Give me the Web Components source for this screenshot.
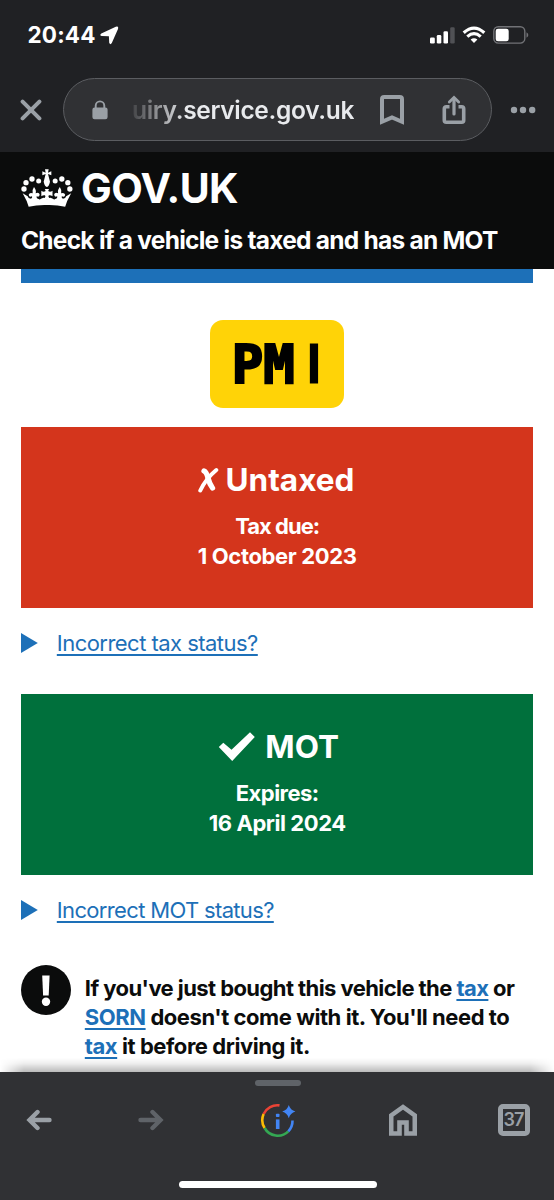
<!DOCTYPE html>
<html lang="en">
<head>
<meta charset="utf-8">
<title>Check if a vehicle is taxed and has an MOT</title>
<style>
    html, body{
        margin: 0;
        padding: 0;
    }
    body{
        width: 554px;
        height: 1200px;
        overflow: hidden;
        background: #fff;
        color: #0b0c0c;
        font-family: Inter, "Liberation Sans", sans-serif;
    }
    a{
        color: #1d70b8;
        text-decoration: underline;
        text-decoration-thickness: 1.5px;
        text-underline-offset: 3px;
    }
</style>
</head>
<body>
<phone-screen>
    <status-bar time="20:44"></status-bar>
    <address-bar><b>uiry</b>.service.gov.uk</address-bar>
    <gov-header>Check if a vehicle is taxed and has an MOT</gov-header>
    <vehicle-page>
        <number-plate></number-plate>
        <status-panel kind="bad" title-width="129" label="Tax due:" label-width="84" date="1 October 2023" date-width="159">Untaxed</status-panel>
        <details-link width="201">Incorrect tax status?</details-link>
        <status-panel kind="good" title-width="74" label="Expires:" label-width="83" date="16 April 2024" date-width="137">MOT</status-panel>
        <details-link width="217">Incorrect MOT status?</details-link>
        <warning-text>
            <fit-line width="429.5">If you've just bought this vehicle the <a>tax</a> or</fit-line>
            <fit-line width="424.5"><a>SORN</a> doesn't come with it. You'll need to</fit-line>
            <fit-line width="225"><a>tax</a> it before driving it.</fit-line>
        </warning-text>
    </vehicle-page>
    <bottom-bar tabs="37"></bottom-bar>
</phone-screen>

<script>
class BaseElement extends HTMLElement{
    constructor() {
        super();
        this.attachShadow({mode:'open'})
    }

    connectedCallback(){
        this.shadowRoot.innerHTML = this.render()
    }

    attr(name){
        return this.getAttribute(name) || ''
    }
}

// one line of text, tracked so that it takes the given width
class FitLine extends BaseElement{
    render(){
        return `
            <style>
                :host{ display: block; white-space: nowrap; }
                span{ display: inline-block; text-decoration: inherit; }
            </style>
            <span><slot></slot></span>`
    }

    connectedCallback(){
        super.connectedCallback()
        const span = this.shadowRoot.querySelector('span')
        const nodes = this.shadowRoot.querySelector('slot').assignedNodes({flatten:true})
        const count = nodes.map(node => node.textContent).join('').trim().length
        const space = (Number(this.attr('width')) - span.getBoundingClientRect().width) / count
        span.style.letterSpacing = space.toFixed(3) + 'px'
    }
}

class PhoneScreen extends BaseElement{
    render(){
        return `
            <style>
                :host{
                    display: grid;
                    grid-template-rows: 64px 88px 117px 803px 128px;
                    width: 554px;
                    height: 1200px;
                }
            </style>
            <slot></slot>`
    }
}

class StatusBar extends BaseElement{
    render(){
        return `
            <style>
                :host{
                    display: flex;
                    align-items: center;
                    box-sizing: border-box;
                    padding: 6px 26px 0 27.500px;
                    background: #202124;
                    color: #fff;
                }
                fit-line{ font-size: 22.5px; font-weight: 700; line-height: 30px; }
                .arrow{ margin-left: 4.500px; }
                .signal{ margin-left: auto; }
                .wifi{ margin-left: 7px; }
                .battery{ margin-left: 7px; }
            </style>
            <fit-line width="68">${this.attr('time')}</fit-line>
            <svg class="arrow" width="19" height="19" viewBox="0 0 19 19"><path d="M1.300 7.600 15.800 .7Q18.900 -.2 18 2.900L11.800 17Q10.300 19.400 9.200 16.800L8.900 10.300 1.900 10Q-.9 9.300 1.300 7.600Z" fill="#fff"/></svg>
            <svg class="signal" width="25" height="18" viewBox="0 0 25 18" fill="#fff">
                <rect x="0" y="11.500" width="4.800" height="6" rx="1.300"/>
                <rect x="6.800" y="9" width="4.500" height="8.500" rx="1.300"/>
                <rect x="13.500" y="5.200" width="4.500" height="12.300" rx="1.300"/>
                <rect x="20.200" y="1.200" width="4.500" height="16.300" rx="1.300" fill="#505155"/>
            </svg>
            <svg class="wifi" width="24" height="18" viewBox="0 0 24 18" fill="none" stroke="#fff" stroke-width="3.200">
                <path d="M1.700 6.700Q12 -2.600 22.300 6.700"/>
                <path d="M5.300 10.600Q12 4.700 18.700 10.600"/>
                <path d="M8.600 13.600Q12 10.900 15.400 13.600L12 17Z" fill="#fff" stroke="none"/>
            </svg>
            <svg class="battery" width="36" height="18" viewBox="0 0 36 18">
                <rect x=".8" y=".8" width="31" height="16.300" rx="4.500" fill="none" stroke="#717276" stroke-width="1.400"/>
                <rect x="2.700" y="2.700" width="13" height="12.500" rx="2.300" fill="#fff"/>
                <path d="M33.500 6.300Q35.300 7.200 35.300 9T33.500 11.700Z" fill="#717276"/>
            </svg>`
    }
}

class AddressBar extends BaseElement{
    render(){
        return `
            <style>
                :host{
                    display: flex;
                    align-items: center;
                    box-sizing: border-box;
                    padding: 3px 19px 0 20px;
                    background: #202124;
                    color: #e8eaed;
                }
                .pill{
                    display: flex;
                    align-items: center;
                    box-sizing: border-box;
                    width: 429px;
                    height: 63px;
                    margin: 0 18px 0 20.500px;
                    padding-left: 28px;
                    border: 1.500px solid #5b5d61;
                    border-radius: 32px;
                    background: #303134;
                }
                fit-line{
                    width: 222px;
                    margin-left: 24.500px;
                    font-size: 24.500px;
                    font-weight: 600;
                    line-height: 34px;
                    -webkit-mask-image: linear-gradient(90deg, rgba(0,0,0,.1), #000 54px);
                    mask-image: linear-gradient(90deg, rgba(0,0,0,.1), #000 54px);
                }
                ::slotted(b){ font-weight: 600; }
                .mark{ margin-left: 25.500px; }
                .share{ margin-left: 38.500px; }
                svg{ flex: none; }
            </style>
            <svg width="22" height="22" viewBox="0 0 22 22" stroke="#9aa0a6" stroke-width="4" stroke-linecap="round"><path d="M2.600 2.600 19.400 19.400M19.400 2.600 2.600 19.400"/></svg>
            <div class="pill">
                <svg width="16" height="20" viewBox="0 0 16 20"><path d="M3.700 8V5.700a4.300 4.300 0 0 1 8.600 0V8" fill="none" stroke="#9aa0a6" stroke-width="1.900"/><rect x=".4" y="7.600" width="15.200" height="11.600" rx="2.200" fill="#9aa0a6"/></svg>
                <fit-line width="222"><slot></slot></fit-line>
                <svg class="mark" width="24" height="30" viewBox="0 0 24 30" fill="none" stroke="#9aa0a6" stroke-width="4"><path d="M2 26.800V4.200Q2 2 4.200 2H19.800Q22 2 22 4.200V26.800L12 22.500Z"/></svg>
                <svg class="share" width="24" height="30" viewBox="0 0 24 30" fill="none" stroke="#9aa0a6" stroke-width="3.600"><path d="M7.500 11.800H4.300Q2.300 11.800 2.300 13.800V25.200Q2.300 27.200 4.300 27.200H19.700Q21.700 27.200 21.700 25.200V13.800Q21.700 11.800 19.700 11.800H16.500"/><path d="M12 19V4" stroke-width="3.200" stroke-linecap="round"/><path d="M7.300 7 12 2.500 16.700 7" stroke-width="2.800" stroke-linecap="round"/></svg>
            </div>
            <svg width="26" height="8" viewBox="0 0 26 8" fill="#9aa0a6"><circle cx="4" cy="4" r="3.200"/><circle cx="13" cy="4" r="3.200"/><circle cx="22.200" cy="4" r="3.200"/></svg>`
    }
}

class GovHeader extends BaseElement{
    render(){
        return `
            <style>
                :host{
                    display: block;
                    box-sizing: border-box;
                    padding: 14px 0 0 21px;
                    background: #0b0c0c;
                    color: #fff;
                    font-weight: 700;
                }
                .brand{ display: flex; align-items: center; height: 44px; }
                .brand fit-line{ margin-left: 8px; font-size: 41px; line-height: 44px; }
                .service{ margin-top: 14px; font-size: 24.500px; line-height: 32px; }
            </style>
            <div class="brand">
                <svg width="52" height="38" viewBox="63 55 156 114" fill="#fff">
                    <g id="half">
                        <circle cx="72" cy="115" r="8"/>
                        <circle cx="78" cy="96" r="8"/>
                        <circle cx="96" cy="85" r="8"/>
                        <circle cx="116" cy="91" r="7.500"/>
                        <path d="M141 147Q130 150 126 144Q129 139 134 142Q138 138 135 134Q130 132 124 137V120Q130 125 136 122Q138 119 134 115H141Z"/>
                        <path d="M102 109Q110 119 107 128Q116 123 119 131Q119 141 110 137Q108 144 118 146L117 151 92 154 90 145Q98 144 96 137Q87 141 86 132Q89 124 98 128Q95 119 102 109Z"/>
                        <path d="M68 128 83 137Q85 146 96 144Q114 152 126 143Q132 147 141 146V163Q112 162 86 168L80 151Z"/>
                    </g>
                    <use href="#half" transform="matrix(-1 0 0 1 281.500 0)"/>
                    <path d="M135 56H146L144 66 154 62V74L144 70 150 93Q147 107 140.700 109Q134 107 131 93L137 70 127 74V62L137 66Z"/>
                </svg>
                <fit-line width="157">GOV.UK</fit-line>
            </div>
            <fit-line class="service" width="476.500"><slot></slot></fit-line>`
    }
}

class VehiclePage extends BaseElement{
    render(){
        return `
            <style>
                :host{
                    display: block;
                    box-sizing: border-box;
                    padding: 0 21.400px 0 21.300px;
                    overflow: hidden;
                    background: #fff;
                }
                .strip{ height: 14px; background: #1d70b8; }
            </style>
            <div class="strip"></div>
            <slot></slot>`
    }
}

class NumberPlate extends BaseElement{
    render(){
        return `
            <style>
                :host{
                    display: flex;
                    justify-content: center;
                    width: 134px;
                    height: 88px;
                    margin: 37.200px auto 18.800px;
                    border-radius: 13px;
                    background: #ffd307;
                }
            </style>
            <svg width="134" height="88" viewBox="0 0 134 88" font-size="54" stroke="#000" fill="#000">
                <text x="21.800" y="63" font-family="DejaVu Sans Mono, monospace" font-weight="700" stroke-width="2.200" textLength="63" lengthAdjust="spacingAndGlyphs">PM</text>
                <text x="96.500" y="63" font-family="Inter, sans-serif" font-weight="600" stroke-width="1.200">I</text>
            </svg>`
    }
}

class StatusPanel extends BaseElement{
    render(){
        const icon = this.attr('kind') === 'bad'
            ? '<svg width="21" height="26" viewBox="0 0 21 26" fill="none" stroke="#fff" stroke-linecap="round"><path d="M6 4Q8.500 5 10 11T14.500 21" stroke-width="5.300"/><path d="M18.300 3Q8 11.500 2.300 23.500" stroke-width="4"/></svg>'
            : '<svg width="38" height="31" viewBox="0 0 38 31"><path d="M.8 16 5.300 11.700 13.500 18.800 32 1.200 36.800 6 14.200 30Z" fill="#fff"/></svg>'
        return `
            <style>
                :host{
                    display: flex;
                    flex-direction: column;
                    align-items: center;
                    box-sizing: border-box;
                    height: 181.500px;
                    padding-top: 32.500px;
                    background: #00703c;
                    color: #fff;
                    font-weight: 700;
                }
                :host([kind=bad]){ background: #d4351c; }
                .title{ display: flex; align-items: center; gap: 6px; height: 41px; margin-bottom: 11.500px; }
                :host([kind=bad]) .title{ padding-right: 1.500px; }
                :host([kind=good]) .title{ gap: 9px; padding-left: 3px; }
                .title fit-line{ font-size: 31.500px; line-height: 41px; }
                .row{ font-size: 22px; line-height: 29.700px; }
            </style>
            <div class="title">${icon}<fit-line width="${this.attr('title-width')}"><slot></slot></fit-line></div>
            <fit-line class="row" width="${this.attr('label-width')}">${this.attr('label')}</fit-line>
            <fit-line class="row" width="${this.attr('date-width')}">${this.attr('date')}</fit-line>`
    }
}

class DetailsLink extends BaseElement{
    render(){
        return `
            <style>
                :host{
                    display: flex;
                    align-items: center;
                    height: 30px;
                    padding: 19.500px 0 36px;
                    color: #1d70b8;
                    font-size: 22px;
                    line-height: 30px;
                }
                fit-line{
                    margin-left: 18.500px;
                    text-decoration: underline;
                    text-decoration-thickness: 1.500px;
                    text-underline-offset: 3px;
                    text-decoration-skip-ink: none;
                }
            </style>
            <svg width="17" height="20" viewBox="0 0 17 20"><path d="M0 0 16.800 10 0 20Z" fill="#1d70b8"/></svg>
            <fit-line width="${this.attr('width')}"><slot></slot></fit-line>`
    }
}

class WarningText extends BaseElement{
    render(){
        return `
            <style>
                :host{
                    display: flex;
                    gap: 13.500px;
                    margin-top: 4px;
                    font-size: 22px;
                    font-weight: 700;
                    line-height: 28.600px;
                }
                svg{ flex: none; }
                .lines{ padding-top: 9.500px; }
            </style>
            <svg width="50" height="50" viewBox="0 0 50 50"><circle cx="25" cy="25" r="25" fill="#0b0c0c"/><path d="M21.200 10.500H28.600L27.700 30.500H22.100Z" fill="#fff"/><circle cx="25" cy="36.800" r="4.200" fill="#fff"/></svg>
            <div class="lines"><slot></slot></div>`
    }
}

class BottomBar extends BaseElement{
    render(){
        return `
            <style>
                :host{
                    display: flex;
                    flex-direction: column;
                    align-items: center;
                    position: relative;
                    background: #303134;
                }
                .shade{
                    position: absolute;
                    left: 0;
                    right: 0;
                    top: -14px;
                    height: 14px;
                    background: linear-gradient(rgba(0,0,0,0), rgba(0,0,0,.07) 40%, rgba(0,0,0,.27));
                    -webkit-mask-image: linear-gradient(90deg, transparent, #000 24px, #000 530px, transparent);
                    mask-image: linear-gradient(90deg, transparent, #000 24px, #000 530px, transparent);
                }
                .grip{ width: 46px; height: 6px; margin: 8px 0 0 1px; border-radius: 3px; background: #5f6368; }
                nav{
                    display: grid;
                    grid-template-columns: 112px 122px 129px 109px 32px;
                    align-items: center;
                    box-sizing: border-box;
                    width: 100%;
                    height: 36px;
                    margin-top: 16px;
                    padding-left: 26px;
                }
                nav svg{ display: block; }
                .tabs{
                    box-sizing: border-box;
                    width: 32px;
                    height: 32px;
                    border: 5px solid #9aa0a6;
                    border-radius: 5px;
                    color: #9aa0a6;
                    font-size: 18px;
                    font-weight: 600;
                    line-height: 22px;
                    text-align: center;
                    letter-spacing: -1px;
                    text-indent: -1px;
                }
                .home{ width: 198px; height: 7px; margin: 43px 0 0 1px; border-radius: 4px; background: #fff; }
            </style>
            <div class="shade"></div>
            <div class="grip"></div>
            <nav>
                <svg width="26" height="22" viewBox="0 0 26 22" fill="none" stroke="#9aa0a6" stroke-width="4.400" stroke-linecap="round"><path d="M23.500 11H4M11.500 3 3.500 11 11.500 19"/></svg>
                <svg width="26" height="22" viewBox="0 0 26 22" fill="none" stroke="#5f6368" stroke-width="4.400" stroke-linecap="round"><path d="M2.500 11H22M14.500 3 22.500 11 14.500 19"/></svg>
                <svg width="36" height="36" viewBox="0 0 36 36" fill="none" stroke-width="2.600">
                    <path d="M19.500 3.400A15 15 0 0 0 3.600 12" stroke="#ea4335"/>
                    <path d="M3.600 12A15 15 0 0 0 4.600 26" stroke="#fbbc04"/>
                    <path d="M4.600 26A15 15 0 0 0 28.300 29.300" stroke="#34a853"/>
                    <path d="M28.300 29.300A15 15 0 0 0 32.500 18.500" stroke="#4285f4"/>
                    <path d="M28.800 3Q30.300 8.100 35.400 9.600Q30.300 11.100 28.800 16.200Q27.300 11.100 22.200 9.600Q27.300 8.100 28.800 3Z" fill="#4285f4"/>
                    <path d="M15.900 17.400H19.500V27H15.900Z" fill="#4285f4"/>
                    <rect x="15.900" y="11.800" width="3.600" height="3.200" rx=".8" fill="#4285f4"/>
                </svg>
                <svg width="28" height="32" viewBox="0 0 28 32" fill="none" stroke="#9aa0a6"><path d="M2.200 29.500V11.500L14 3 25.800 11.500V29.500H17.500V18.500H10.500V29.500Z" stroke-width="4.600"/></svg>
                <div class="tabs">${this.attr('tabs')}</div>
            </nav>
            <div class="home"></div>`
    }
}

customElements.define('phone-screen',PhoneScreen)
customElements.define('status-bar',StatusBar)
customElements.define('address-bar',AddressBar)
customElements.define('gov-header',GovHeader)
customElements.define('vehicle-page',VehiclePage)
customElements.define('number-plate',NumberPlate)
customElements.define('status-panel',StatusPanel)
customElements.define('details-link',DetailsLink)
customElements.define('warning-text',WarningText)
customElements.define('bottom-bar',BottomBar)

// last, so that every line is measured in its final font
customElements.define('fit-line',FitLine)
</script>
</body>
</html>
